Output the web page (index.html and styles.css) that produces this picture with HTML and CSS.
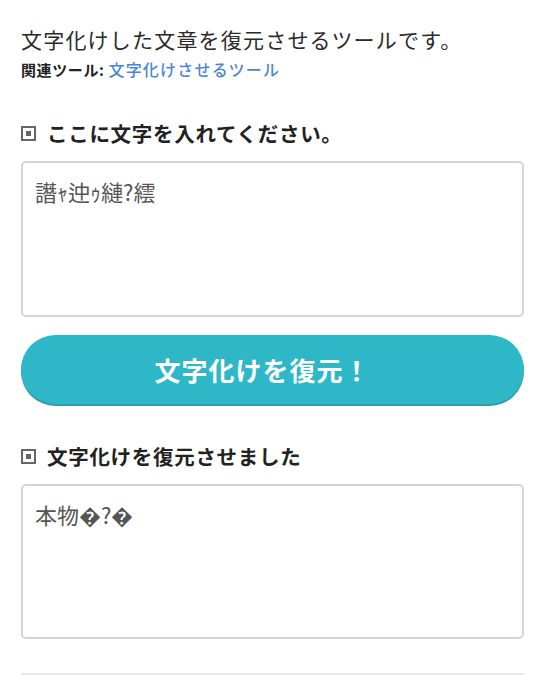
FILE: index.html
```html
<!DOCTYPE html>
<html lang="ja">
<head>
    <meta charset="UTF-8">
    <title>文字化け復元ツール</title>
    <link rel="stylesheet" href="styles.css">
</head>
<body>
<div id="box">
    <p class="lead">文字化けした文章を復元させるツールです。</p>
    <p class="related"><b>関連ツール:</b> <a href="#">文字化けさせるツール</a></p>

    <h2 class="ttl"><span class="mark"></span>ここに文字を入れてください。</h2>
    <textarea id="src" class="txt">譖ｬ迚ｩ縺?繧</textarea>
    <button id="btn" class="btn">文字化けを復元！</button>

    <h2 class="ttl ttl2"><span class="mark"></span>文字化けを復元させました</h2>
    <textarea id="dst" class="txt txt2" readonly>本物�?�</textarea>

    <hr class="line">
</div>
</body>
</html>
```

FILE: styles.css
```css
*{ margin:0; padding:0; box-sizing:border-box;}
body{ font-family:"Noto Sans CJK JP", "Noto Sans", sans-serif; color:#222; background:#fff;}
#box{ padding:24px 21px 0;}
.lead{ font-size:21px; line-height:30px; letter-spacing:1.2px; color:#2a2a2a;}
.related{ margin-top:4px; font-size:15px; line-height:22px; letter-spacing:0.6px;}
.related b{ font-weight:bold; color:#222;}
.related a{ color:#4a86d8; text-decoration:none; font-size:16px; font-weight:500; letter-spacing:1.2px;}
.ttl{ display:flex; align-items:center; margin-top:38px; font-size:20.5px; line-height:28px; font-weight:bold; letter-spacing:0.7px; color:#222;}
.ttl2{ margin-top:38px; font-weight:600;}
.mark{ width:15px; height:15px; border:2px solid #666; margin-right:11px; display:flex; align-items:center; justify-content:center;}
.mark:after{ content:""; width:5px; height:5px; background:#666;}
.txt{ display:block; width:100%; height:156px; margin-top:14px; padding:13px 12px; border:2px solid #d3d5da; border-radius:5px; font-family:"Noto Sans CJK JP", sans-serif; font-size:22px; line-height:30px; color:#555; resize:none; outline:none; background:#fff;}
.txt2{ height:155px;}
.btn{ display:block; width:100%; height:69px; margin-top:18px; padding-right:20px; border:none; border-radius:35px; background:#2eb7c7; box-shadow:0 2px 0 #2a9fae; color:#fff; font-family:"Noto Sans CJK JP", sans-serif; font-size:26px; font-weight:bold; letter-spacing:1px; cursor:pointer;}
.line{ margin-top:34px; border:none; border-top:2px solid #e8e8ea;}
```
